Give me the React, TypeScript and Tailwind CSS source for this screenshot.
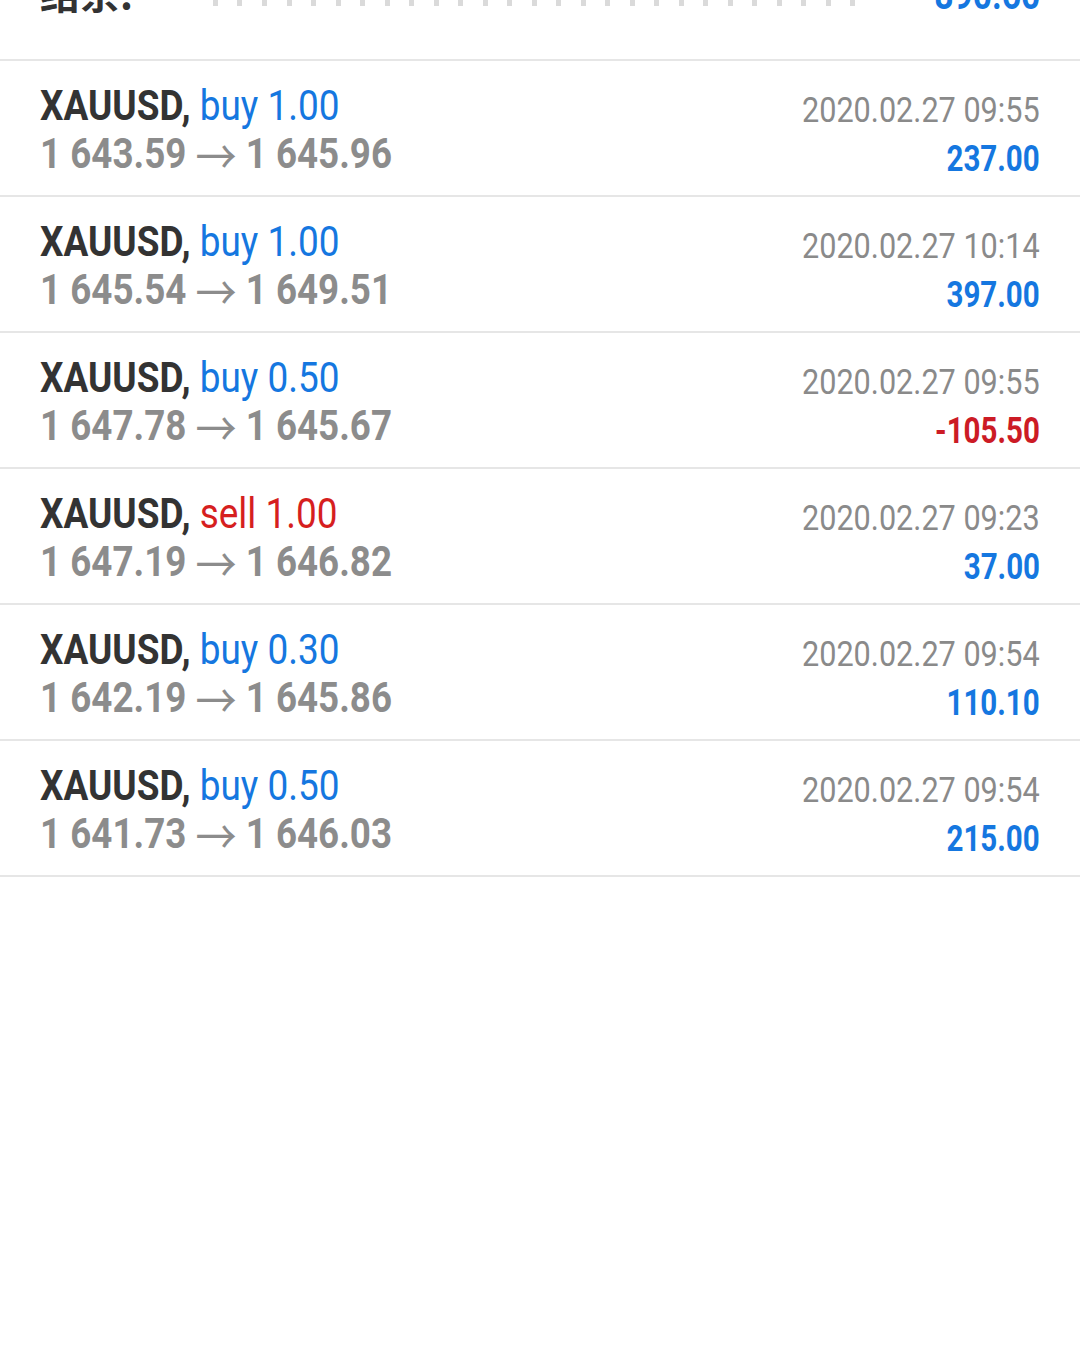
import React from "react";

type Deal = {
  side: "buy" | "sell";
  lots: string;
  open: string;
  close: string;
  time: string;
  profit: string;
};

const deals: Deal[] = [
  { side: "buy", lots: "1.00", open: "1 643.59", close: "1 645.96", time: "2020.02.27 09:55", profit: "237.00" },
  { side: "buy", lots: "1.00", open: "1 645.54", close: "1 649.51", time: "2020.02.27 10:14", profit: "397.00" },
  { side: "buy", lots: "0.50", open: "1 647.78", close: "1 645.67", time: "2020.02.27 09:55", profit: "-105.50" },
  { side: "sell", lots: "1.00", open: "1 647.19", close: "1 646.82", time: "2020.02.27 09:23", profit: "37.00" },
  { side: "buy", lots: "0.30", open: "1 642.19", close: "1 645.86", time: "2020.02.27 09:54", profit: "110.10" },
  { side: "buy", lots: "0.50", open: "1 641.73", close: "1 646.03", time: "2020.02.27 09:54", profit: "215.00" },
];

function DealRow({ deal }: { deal: Deal }) {
  const sideColor = deal.side === "buy" ? "text-[#1577e0]" : "text-[#d61f1f]";
  const profitColor = deal.profit.startsWith("-") ? "text-[#cc1b25]" : "text-[#1577e0]";

  return (
    <div className="flex h-[136px] justify-between border-b-2 border-[#e6e6e6] px-[40px]">
      <div className="pt-[21px]">
        <div className="h-[48px] text-[42px] leading-[48px]">
          <span className="inline-block origin-left scale-x-[0.88] whitespace-nowrap">
            <span className="font-bold text-[#333333]">XAUUSD,</span>{" "}
            <span className={sideColor}>
              {deal.side} {deal.lots}
            </span>
          </span>
        </div>
        <div className="h-[48px] text-[42px] leading-[48px] text-[#8c8c8c]">
          <span className="inline-block origin-left scale-x-[0.875] whitespace-nowrap">
            <span className="font-bold">{deal.open}</span>{" "}
            <span className="align-[-6px] font-['Noto_Sans_CJK_SC',sans-serif] text-[47px] font-normal leading-[0px]">→</span>{" "}
            <span className="font-bold">{deal.close}</span>
          </span>
        </div>
      </div>
      <div className="flex flex-col items-end pt-[26px]">
        <div className="h-[48px] text-[35px] leading-[48px] text-[#8a8a8a]">
          <span className="inline-block origin-right scale-x-[0.875] whitespace-nowrap">{deal.time}</span>
        </div>
        <div className={`h-[48px] text-[36px] font-bold leading-[48px] ${profitColor}`}>
          <span className="inline-block origin-right scale-x-[0.82] whitespace-nowrap">{deal.profit}</span>
        </div>
      </div>
    </div>
  );
}

export default function App() {
  return (
    <div className="flex h-[1360px] w-[1080px] flex-col overflow-hidden bg-white font-['Roboto',sans-serif]">
      {/* balance row, scrolled partly off the top */}
      <div className="flex h-[61px] shrink-0 flex-col border-b-2 border-[#e6e6e6]">
        <div className="-mt-[32px] flex items-baseline px-[40px] leading-[48px]">
          <span className="font-['Noto_Sans_CJK_SC',sans-serif] text-[40px] font-bold text-[#333333]">结余:</span>
          <div className="ml-[80px] mr-[46px] mt-[26px] h-[12px] flex-1 self-start bg-[repeating-linear-gradient(90deg,#dadada_0_5px,transparent_5px_24.5px)]" />
          <span className="text-[40px] font-bold text-[#1577e0]">
            <span className="inline-block origin-right scale-x-[0.84]">890.60</span>
          </span>
        </div>
      </div>
      {deals.map((d, i) => (
        <DealRow key={i} deal={d} />
      ))}
    </div>
  );
}
